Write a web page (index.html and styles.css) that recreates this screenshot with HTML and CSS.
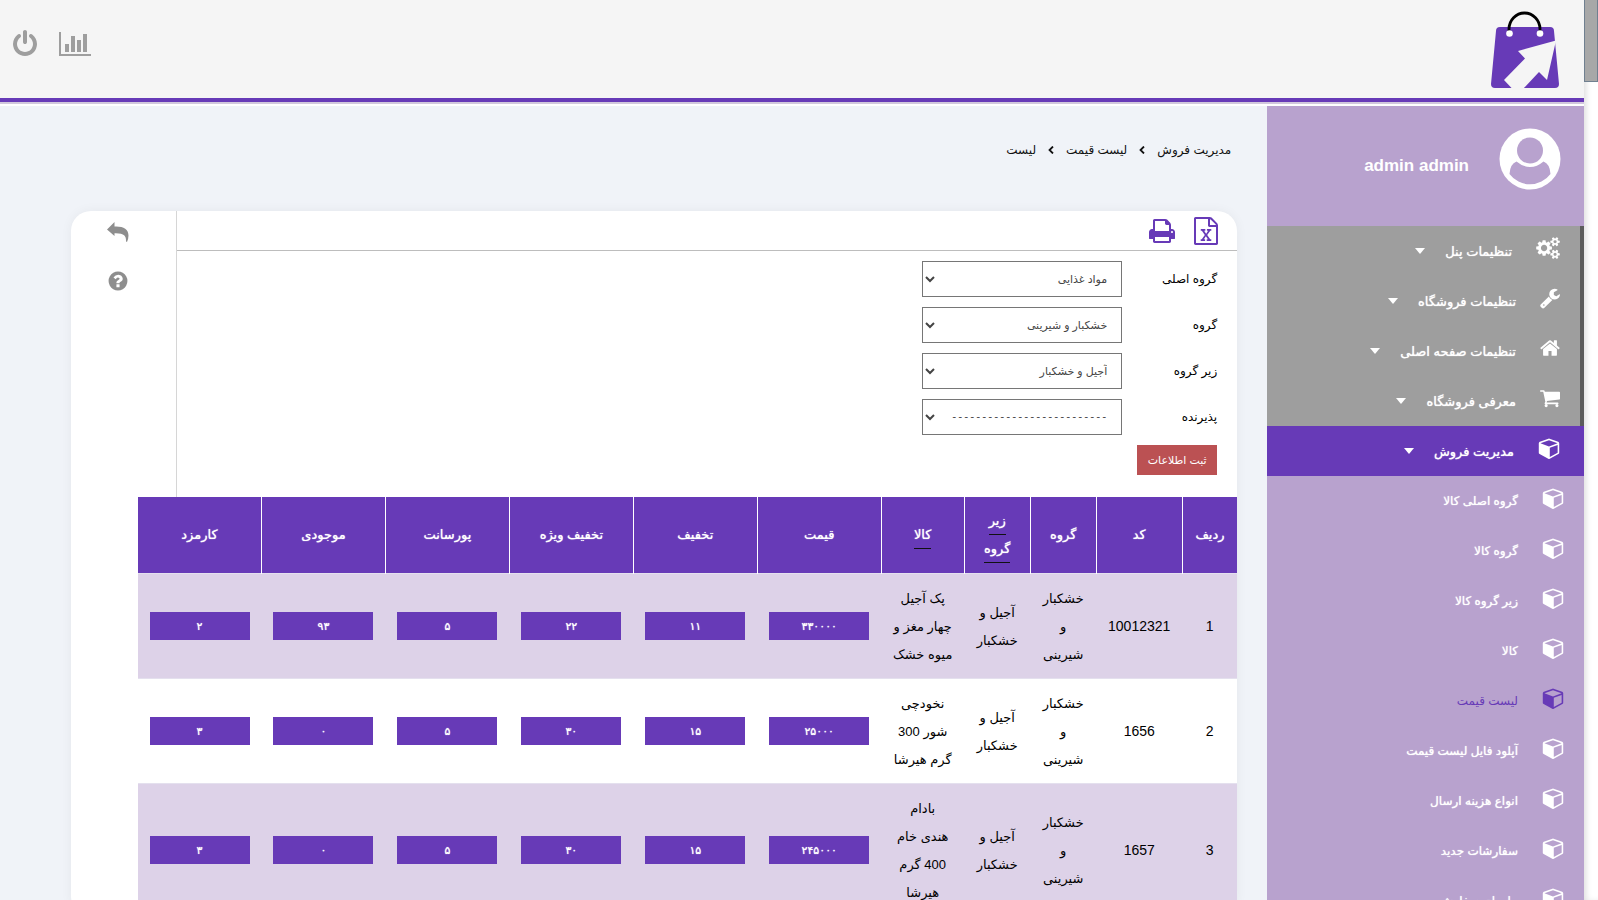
FILE: index.html
```html
<!DOCTYPE html>
<html lang="fa" dir="rtl">
<head>
<meta charset="utf-8">
<title>لیست قیمت</title>
<link rel="stylesheet" href="styles.css">
</head>
<body>
<svg class="defs" aria-hidden="true">
  <symbol id="cube" viewBox="0 0 1664 1792"><path d="M896 1629l640-349v-636l-640 233v752zm-64-865l698-254-698-254-698 254zm832-252v768q0 35-18 65t-49 47l-704 384q-28 16-61 16t-61-16l-704-384q-31-17-49-47t-18-65v-768q0-40 23-73t61-47l704-256q22-8 44-8t44 8l704 256q38 14 61 47t23 73z"/></symbol>
  <symbol id="sep" viewBox="0 0 6 8"><path d="M5 .5L1.500 4 5 7.500" fill="none" stroke="currentColor" stroke-width="1.800"/></symbol>
</svg>
<div class="page">
  <header class="topbar">
    <a href="#" class="logo" aria-label="فروشگاه">
      <svg width="70" height="80" viewBox="0 0 70 80">
        <path d="M10 17H60q4 0 4 4L69 74q0 4-4 4H5q-4 0-4-4L6 21q0-4 4-4z" fill="#673ab7"/>
        <path d="M66 30.500L28 41l7 7.500L14 70l8.500 9H33L49 62l8 8z" fill="#f5f5f5"/>
        <path d="M19 21V19a15 15.500 0 0 1 31 0v2" fill="none" stroke="#000" stroke-width="2.800"/>
        <circle cx="19.500" cy="23.500" r="3.300" fill="#fff"/><circle cx="50" cy="23.500" r="3.300" fill="#fff"/>
      </svg>
    </a>
    <nav class="tools">
      <a href="#" aria-label="نمودار"><svg width="32" height="28" viewBox="0 0 2048 1792"><path d="M640 896v512h-256v-512h256zm384-512v1024h-256v-1024h256zm1024 1152v128h-2048v-1536h128v1408h1920zm-640-896v768h-256v-768h256zm384-384v1152h-256v-1152h256z"/></svg></a>
      <a href="#" aria-label="خروج"><svg width="28" height="28" viewBox="0 0 1792 1792"><path d="M1664 896q0 156-61 298t-164 245-245 164-298 61-298-61-245-164-164-245-61-298q0-182 80.500-343t226.500-270q43-32 95.500-25t83.500 50q32 42 24.500 94.500t-49.500 84.500q-98 74-151.500 181t-53.500 228q0 104 40.500 198.500t109.500 163.500 163.500 109.500 198.500 40.500 198.500-40.500 163.500-109.500 109.500-163.500 40.500-198.500q0-121-53.500-228t-151.500-181q-42-32-49.500-84.500t24.500-94.500q31-43 84-50t95 25q146 109 226.500 270t80.500 343zm-640-768v640q0 52-38 90t-90 38-90-38-38-90v-640q0-52 38-90t90-38 90 38 38 90z"/></svg></a>
    </nav>
  </header>
  <div class="layout">
    <aside class="sidebar">
      <div class="profile">
        <svg width="62" height="62" viewBox="0 0 62 62"><circle cx="31" cy="31" r="30.500" fill="#fff"/><circle cx="31" cy="22.500" r="13" fill="#b8a2ce"/><path d="M17.500 33.500Q24 39 31 39t13.500-5.500Q51 36 51.500 46A25.500 25.500 0 0 1 10.500 46Q11 36 17.500 33.500z" fill="#b8a2ce"/></svg>
        <strong dir="ltr">admin admin</strong>
      </div>
      <nav class="menu">
        <a href="#" class="item"><svg width="24" height="22" viewBox="0 0 1920 1792"><path d="M896 896q0-106-75-181t-181-75-181 75-75 181 75 181 181 75 181-75 75-181zm768 512q0-52-38-90t-90-38-90 38-38 90q0 53 37.500 90.500t90.500 37.500 90.500-37.500 37.500-90.500zm0-1024q0-52-38-90t-90-38-90 38-38 90q0 53 37.500 90.500t90.500 37.500 90.500-37.500 37.500-90.500zm-384 421v185q0 10-7 19.500t-16 10.500l-155 24q-11 35-32 76 34 48 90 115 7 11 7 20 0 12-7 19-23 30-82.500 89.500t-78.500 59.500q-11 0-21-7l-115-90q-37 19-77 31-11 108-23 155-7 24-30 24h-186q-11 0-20-7.500t-10-17.500l-23-153q-34-10-75-31l-118 89q-7 7-20 7-11 0-21-8-144-133-144-160 0-9 7-19 10-14 41-53t47-61q-23-44-35-82l-152-24q-10-1-17-9.500t-7-19.500v-185q0-10 7-19.500t16-10.500l155-24q11-35 32-76-34-48-90-115-7-11-7-20 0-12 7-20 22-30 82-89t79-59q11 0 21 7l115 90q34-18 77-32 11-108 23-154 7-24 30-24h186q11 0 20 7.500t10 17.500l23 153q34 10 75 31l118-89q8-7 20-7 11 0 21 8 144 133 144 160 0 8-7 19-12 16-42 54t-45 60q23 48 34 82l152 23q10 2 17 10.500t7 19.500zm640 533v140q0 16-149 31-12 27-30 52 51 113 51 138 0 4-4 7-122 71-124 71-8 0-46-47t-52-68q-20 2-30 2t-30-2q-14 21-52 68t-46 47q-2 0-124-71-4-3-4-7 0-25 51-138-18-25-30-52-149-15-149-31v-140q0-16 149-31 13-29 30-52-51-113-51-138 0-4 4-7 4-2 35-20t59-34 30-16q8 0 46 46.500t52 67.500q20-2 30-2t30 2q51-71 92-112l6-2q4 0 124 70 4 3 4 7 0 25-51 138 17 23 30 52 149 15 149 31zm0-1024v140q0 16-149 31-12 27-30 52 51 113 51 138 0 4-4 7-122 71-124 71-8 0-46-47t-52-68q-20 2-30 2t-30-2q-14 21-52 68t-46 47q-2 0-124-71-4-3-4-7 0-25 51-138-18-25-30-52-149-15-149-31v-140q0-16 149-31 13-29 30-52-51-113-51-138 0-4 4-7 4-2 35-20t59-34 30-16q8 0 46 46.500t52 67.500q20-2 30-2t30 2q51-71 92-112l6-2q4 0 124 70 4 3 4 7 0 25-51 138 17 23 30 52 149 15 149 31z"/></svg><span>تنظیمات پنل</span><i class="caret"></i></a>
        <a href="#" class="item"><svg width="20" height="22" viewBox="64 0 1664 1792"><path d="M448 1472q0-26-19-45t-45-19-45 19-19 45 19 45 45 19 45-19 19-45zm644-420l-682 682q-37 37-90 37-52 0-91-37l-106-108q-38-36-38-90 0-53 38-91l681-681q39 98 114.500 173.500t173.500 114.500zm634-435q0 39-23 106-47 134-164.500 217.500t-258.500 83.500q-185 0-316.500-131.500t-131.500-316.500 131.500-316.500 316.500-131.500q58 0 121.500 16.500t107.500 46.500q16 11 16 28t-16 28l-293 169v224l193 107q5-3 79-48.500t135.500-81 70.500-35.500q15 0 23.500 10t8.500 25z"/></svg><span>تنظیمات فروشگاه</span><i class="caret"></i></a>
        <a href="#" class="item"><svg width="20" height="22" viewBox="64 0 1664 1792"><path d="M1472 992v480q0 26-19 45t-45 19h-384v-384h-256v384h-384q-26 0-45-19t-19-45v-480q0-1 .5-3t.5-3l575-474 575 474q1 2 1 6zm223-69l-62 74q-8 9-21 11h-3q-13 0-21-7l-692-577-692 577q-12 8-24 7-13-2-21-11l-62-74q-8-10-7-23.500t11-21.500l719-599q32-26 76-26t76 26l244 204v-195q0-14 9-23t23-9h192q14 0 23 9t9 23v408l219 182q10 8 11 21.500t-7 23.500z"/></svg><span>تنظیمات صفحه اصلی</span><i class="caret"></i></a>
        <a href="#" class="item"><svg width="20" height="22" viewBox="64 0 1664 1792"><path d="M704 1536q0 52-38 90t-90 38-90-38-38-90 38-90 90-38 90 38 38 90zm896 0q0 52-38 90t-90 38-90-38-38-90 38-90 90-38 90 38 38 90zm128-1088v512q0 24-16.500 42.500t-40.500 21.500l-1044 122q13 60 13 70 0 16-24 64h920q26 0 45 19t19 45-19 45-45 19h-1024q-26 0-45-19t-19-45q0-11 8-31.500t16-36 21.500-40 15.500-29.500l-177-823h-204q-26 0-45-19t-19-45 19-45 45-19h256q16 0 28.500 6.500t19.500 15.500 13 24.500 8 26 5.500 29.500 4.500 26h1201q26 0 45 19t19 45z"/></svg><span>معرفی فروشگاه</span><i class="caret"></i></a>
        <a href="#" class="item active"><svg width="22" height="22"><use href="#cube"/></svg><span>مدیریت فروش</span><i class="caret"></i></a>
        <a href="#" class="item sub"><svg width="22" height="22"><use href="#cube"/></svg><span>گروه اصلی کالا</span></a>
        <a href="#" class="item sub"><svg width="22" height="22"><use href="#cube"/></svg><span>گروه کالا</span></a>
        <a href="#" class="item sub"><svg width="22" height="22"><use href="#cube"/></svg><span>زیر گروه کالا</span></a>
        <a href="#" class="item sub"><svg width="22" height="22"><use href="#cube"/></svg><span>کالا</span></a>
        <a href="#" class="item sub current"><svg width="22" height="22"><use href="#cube"/></svg><span>لیست قیمت</span></a>
        <a href="#" class="item sub"><svg width="22" height="22"><use href="#cube"/></svg><span>آپلود فایل لیست قیمت</span></a>
        <a href="#" class="item sub"><svg width="22" height="22"><use href="#cube"/></svg><span>انواع هزینه ارسال</span></a>
        <a href="#" class="item sub"><svg width="22" height="22"><use href="#cube"/></svg><span>سفارشات جدید</span></a>
        <a href="#" class="item sub"><svg width="22" height="22"><use href="#cube"/></svg><span>پیامهای سفارش</span></a>
      </nav>
    </aside>
    <main class="main">
      <nav class="crumbs">
        <a href="#">مدیریت فروش</a><svg width="6" height="8"><use href="#sep"/></svg><a href="#">لیست قیمت</a><svg width="6" height="8"><use href="#sep"/></svg><a href="#">لیست</a>
      </nav>
      <section class="card">
        <div class="upper">
          <div class="content">
            <div class="actions">
              <a href="#" aria-label="اکسل"><svg width="28" height="28" viewBox="0 0 1792 1792"><path d="M1596 380q28 28 48 76t20 88v1152q0 40-28 68t-68 28h-1344q-40 0-68-28t-28-68v-1600q0-40 28-68t68-28h896q40 0 88 20t76 48zm-444-244v376h376q-10-29-22-41l-313-313q-12-12-41-22zm384 1528v-1024h-416q-40 0-68-28t-28-68v-416h-768v1536h1280zm-979-234v106h281v-106h-75l103-161q5-7 10-16.500t7.500-13.500 3.500-4h2q1 4 5 10 2 4 4.500 7.500t6 8 6.500 8.500l107 161h-76v106h291v-106h-68l-192-273 195-282h67v-107h-279v107h74l-103 159q-4 7-10 16.500t-9 13.500l-2 3h-2q-1-4-5-10-6-11-17-23l-106-159h76v-107h-290v107h68l189 272-194 283h-68z"/></svg></a>
              <a href="#" aria-label="چاپ"><svg width="28" height="28" viewBox="0 0 1792 1792"><path d="M448 1536h896v-256h-896v256zm0-640h896v-384h-160q-40 0-68-28t-28-68v-160h-640v640zm1152 64q0-26-19-45t-45-19-45 19-19 45 19 45 45 19 45-19 19-45zm128 0v416q0 13-9.500 22.500t-22.500 9.500h-224v160q0 40-28 68t-68 28h-960q-40 0-68-28t-28-68v-160h-224q-13 0-22.500-9.500t-9.500-22.500v-416q0-79 56.500-135.500t135.500-56.500h64v-544q0-40 28-68t68-28h672q40 0 88 20t76 48l152 152q28 28 48 76t20 88v256h64q79 0 135.500 56.500t56.500 135.500z"/></svg></a>
            </div>
            <form class="filters">
              <div class="field"><label for="f1">گروه اصلی</label><select id="f1"><option>مواد غذایی</option></select></div>
              <div class="field"><label for="f2">گروه</label><select id="f2"><option>خشکبار و شیرینی</option></select></div>
              <div class="field"><label for="f3">زیر گروه</label><select id="f3"><option>آجیل و خشکبار</option></select></div>
              <div class="field"><label for="f4">پذیرنده</label><select id="f4" class="empty"><option>--------------------------</option></select></div>
              <button type="button">ثبت اطلاعات</button>
            </form>
          </div>
          <div class="strip">
            <a href="#" aria-label="بازگشت"><svg width="22" height="20" viewBox="0 0 22 20"><path d="M0 7.500L7.500 0v4.500C16 4 21.500 7 21.500 13.500q0 3-1.500 6.500-.8 0-1-1c.3-5-2-8-11.500-7.700V14z"/></svg></a>
            <a href="#" aria-label="راهنما"><svg width="22" height="22" viewBox="0 0 1792 1792"><path d="M1024 1376v-192q0-14-9-23t-23-9h-192q-14 0-23 9t-9 23v192q0 14 9 23t23 9h192q14 0 23-9t9-23zm256-672q0-88-55.500-163t-138.500-116-170-41q-243 0-371 213-15 24 8 42l132 100q7 6 19 6 16 0 25-12 53-68 86-92 34-24 86-24 48 0 85.500 26t37.500 59q0 38-20 61t-68 45q-63 28-115.500 86.500t-52.500 125.500v36q0 14 9 23t23 9h192q14 0 23-9t9-23q0-19 21.500-49.500t54.500-49.500q32-18 49-28.500t46-35 44.500-48 28-60.500 12.500-81zm384 192q0 209-103 385.500t-279.500 279.500-385.500 103-385.500-103-279.500-279.500-103-385.500 103-385.500 279.500-279.500 385.500-103 385.500 103 279.500 279.500 103 385.500z"/></svg></a>
          </div>
        </div>
        <table class="prices">
          <colgroup><col class="c-row"><col class="c-code"><col class="c-group"><col class="c-group"><col class="c-item"><col><col><col><col><col><col></colgroup>
          <thead><tr><th>ردیف</th><th>کد</th><th>گروه</th><th><a href="#">زیر<br>گروه</a></th><th><a href="#">کالا</a></th><th>قیمت</th><th>تخفیف</th><th>تخفیف ویژه</th><th>پورسانت</th><th>موجودی</th><th>کارمزد</th></tr></thead>
          <tbody>
            <tr><td>1</td><td>10012321</td><td>خشکبار<br>و<br>شیرینی</td><td>آجیل و<br>خشکبار</td><td>پک آجیل<br>چهار مغز و<br>میوه خشک</td>
              <td><input aria-label="قیمت" value="۳۳۰۰۰۰"></td><td><input aria-label="تخفیف" value="۱۱"></td><td><input aria-label="تخفیف ویژه" value="۲۲"></td><td><input aria-label="پورسانت" value="۵"></td><td><input aria-label="موجودی" value="۹۳"></td><td><input aria-label="کارمزد" value="۲"></td></tr>
            <tr><td>2</td><td>1656</td><td>خشکبار<br>و<br>شیرینی</td><td>آجیل و<br>خشکبار</td><td>نخودچی<br>شور 300<br>گرم هیرشا</td>
              <td><input aria-label="قیمت" value="۲۵۰۰۰"></td><td><input aria-label="تخفیف" value="۱۵"></td><td><input aria-label="تخفیف ویژه" value="۳۰"></td><td><input aria-label="پورسانت" value="۵"></td><td><input aria-label="موجودی" value="۰"></td><td><input aria-label="کارمزد" value="۳"></td></tr>
            <tr><td>3</td><td>1657</td><td>خشکبار<br>و<br>شیرینی</td><td>آجیل و<br>خشکبار</td><td>بادام<br>هندی خام<br>400 گرم<br>هیرشا</td>
              <td><input aria-label="قیمت" value="۲۴۵۰۰۰"></td><td><input aria-label="تخفیف" value="۱۵"></td><td><input aria-label="تخفیف ویژه" value="۳۰"></td><td><input aria-label="پورسانت" value="۵"></td><td><input aria-label="موجودی" value="۰"></td><td><input aria-label="کارمزد" value="۳"></td></tr>
          </tbody>
        </table>
      </section>
    </main>
  </div>
</div>
<div class="track"><div class="thumb"></div></div>
</body>
</html>
```

FILE: styles.css
```css
* { box-sizing: border-box; }
body {
  margin: 0;
  height: 100vh;
  overflow: hidden;
  display: flex;
  flex-direction: row-reverse;
  background: #fff;
  color: #111;
  font-family: "Liberation Sans", "DejaVu Sans", sans-serif;
  font-size: 12px;
}
a { color: inherit; text-decoration: none; }
svg { display: block; flex: none; fill: currentColor; }
.defs { position: absolute; width: 0; height: 0; }

.track { width: 14px; background: #fff; box-shadow: inset 4px 0 6px -2px #ddd; }
.thumb { height: 82px; background: #a8a8a8; border: 1px solid #708090; border-top: 0; }

.page { flex: 1; min-width: 0; display: flex; flex-direction: column; }
.topbar {
  display: flex;
  justify-content: space-between;
  align-items: flex-start;
  flex: none;
  height: 102px;
  padding: 10px 24px 0 11px;
  background: #f5f5f5;
  border-bottom: 4px solid #673ab7;
  box-shadow: 0 2px 0 #d1c8dc;
  margin-bottom: 4px;
}
.tools { display: flex; gap: 20px; padding-top: 20px; color: #9e9e9e; }
.layout { flex: 1; min-height: 0; display: flex; }

.sidebar { width: 20%; flex: none; background: #b8a2ce; color: #fff; overflow: hidden; }
.profile { height: 120px; display: flex; align-items: flex-start; gap: 30px; padding: 22px 23px 0 0; }
.profile strong { font-size: 17px; line-height: 20px; padding-top: 28px; }
.item {
  height: 50px;
  display: flex;
  align-items: center;
  gap: 20px;
  padding-right: 20px;
  background: #9e9e9e;
  border-right: 4px solid #5c5c5c;
  font-size: 13px;
  text-shadow: 0 0 1px currentColor;
}
.item svg { margin: 0 0 6px 4px; }
.item.active { background: #673ab7; border-color: #673ab7; }
.item.sub { background: none; border: 0; font-size: 12px; }
.item.current { color: #673ab7; text-shadow: none; }
.caret { border: 5px solid transparent; border-top: 6px solid #fff; border-bottom: 0; }

.main { flex: 1; min-width: 0; background: #f0f3f8; padding: 34px 30px 0 71px; }
.crumbs { display: flex; align-items: center; gap: 12px; height: 20px; padding-right: 6px; }
.card { margin-top: 51px; background: #fff; border-radius: 20px; box-shadow: 0 0 12px rgba(0, 0, 0, .05); }
.upper { display: flex; }
.content { flex: 1; }
.strip {
  width: 106px;
  border-right: 1px solid #d6d6d6;
  display: flex;
  flex-direction: column;
  align-items: center;
  gap: 28px;
  padding: 11px 12px 0 0;
  color: #8e8e8e;
}
.actions {
  height: 40px;
  display: flex;
  gap: 16px;
  align-items: center;
  padding-right: 17px;
  border-bottom: 1px solid #bdbdbd;
  color: #673ab7;
}
.filters { padding: 10px 20px 22px; }
.field { display: flex; align-items: center; margin-bottom: 10px; }
.field label { width: 95px; color: #000; }
select {
  width: 200px;
  height: 36px;
  border: 1px solid #767676;
  border-radius: 0;
  background: #fff;
  color: #444;
  font: inherit;
  font-size: 11px;
  padding: 0 10px 0 0;
}
select.empty { font-family: "Liberation Mono", monospace; font-size: 10px; }
.filters button {
  display: block;
  width: 80px;
  height: 30px;
  padding: 0;
  border: 0;
  background: #bb5153;
  color: #fff;
  font: inherit;
  font-size: 11px;
}

.prices {
  width: calc(100% - 66px);
  table-layout: fixed;
  border-collapse: collapse;
  text-align: center;
  color: #000;
}
.c-row { width: 55px; }
.c-code { width: 86px; }
.c-group { width: 66px; }
.c-item { width: 83px; }
.prices th, .prices td { padding: 10px 0; line-height: 28px; }
.prices th {
  height: 76px;
  background: #673ab7;
  color: #fff;
  font-size: 13px;
  font-weight: normal;
  text-shadow: 0 0 1px #fff;
  border-left: 1px solid #fff;
}
.prices th a { border-bottom: 1px solid #111; padding-bottom: 6px; }
.prices td { font-size: 13px; padding: 11px 0 9px; border-top: 1px solid #e4e0ee; }
.prices tbody tr:nth-child(odd) { background: #ddd2e8; }
.prices td:nth-child(-n+2) { font-size: 14px; padding: 10px 0; }
.prices td:nth-child(n+6) { padding: 10px 0; }
.prices input {
  display: block;
  width: 100px;
  height: 28px;
  margin: 0 auto;
  padding: 0;
  border: 0;
  background: #673ab7;
  color: #fff;
  text-align: center;
  font: inherit;
  font-size: 11px;
  text-shadow: 0 0 1px #fff;
}
```
